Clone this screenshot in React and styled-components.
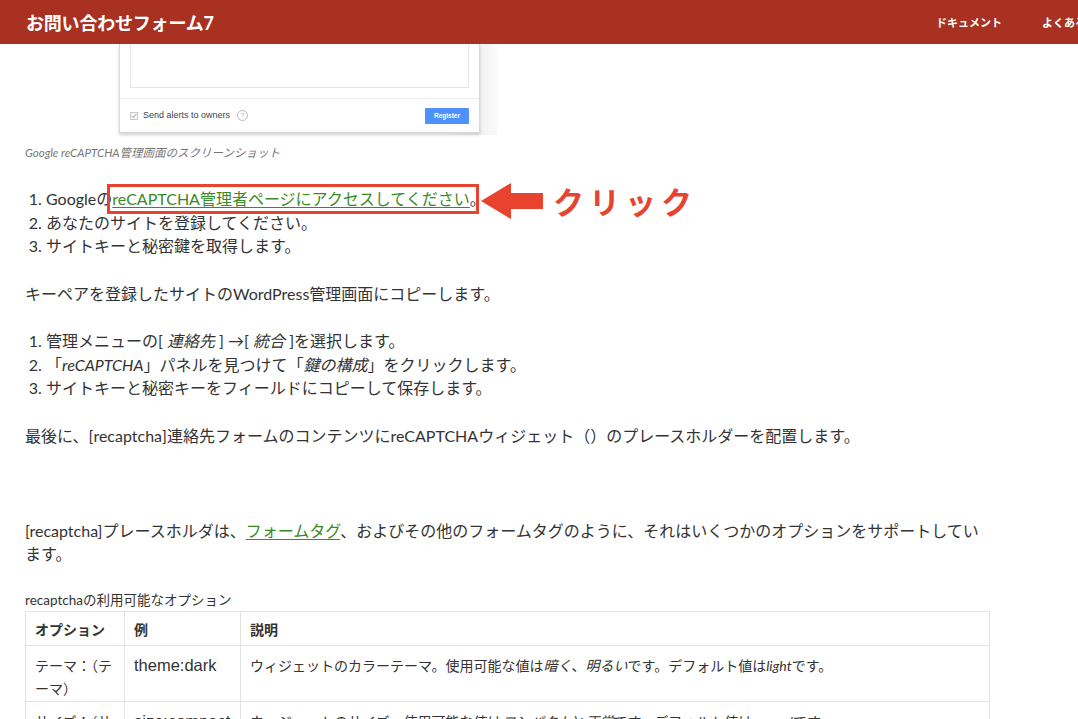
import styled, { createGlobalStyle } from "styled-components";

const GlobalStyle = createGlobalStyle`
  html, body {
    margin: 0;
    padding: 0;
    overflow: hidden;
    background: #fff;
  }
  body {
    font-family: Lato, "Noto Sans CJK JP", sans-serif;
    color: #333;
  }
`;

const Header = styled.header`
  height: 44px;
  background: #a83122;
  overflow: hidden;
`;

const HeaderInner = styled.div`
  display: flex;
  align-items: center;
  justify-content: space-between;
  width: 1128px;
  height: 100%;
  padding-left: 26px;
  box-sizing: border-box;
`;

const SiteTitle = styled.div`
  color: #fff;
  font-size: 18px;
  font-weight: 700;
  letter-spacing: -0.2px;
`;

const Nav = styled.nav`
  display: flex;
`;

const NavItem = styled.a`
  color: #fff;
  font-size: 11px;
  font-weight: 700;
  padding: 0 20px;
  text-decoration: none;
`;

const Main = styled.main`
  width: 965px;
  margin-left: 25px;
  font-size: 16px;
  line-height: 23.5px;
`;

const Figure = styled.div`
  width: 426px;
  height: 91px;
  margin-left: 47px;
  background: linear-gradient(90deg, #fff 0%, #fff 88%, #f3f3f3 96%, #fafafa 100%);
`;

const Card = styled.div`
  width: 361px;
  margin-left: 47px;
  background: #fff;
  border: 1px solid #dadada;
  border-top: none;
  box-shadow: 0 2px 3px rgba(0, 0, 0, 0.18);
  box-sizing: border-box;
`;

const FakeTextarea = styled.div`
  height: 43px;
  margin: 0 10px;
  border: 1px solid #e6e6e6;
  border-top: none;
`;

const CardFooter = styled.div`
  display: flex;
  align-items: center;
  justify-content: space-between;
  height: 33px;
  margin-top: 10px;
  padding: 0 10px;
  border-top: 1px solid #eee;
  font-family: "Liberation Sans", Arial, sans-serif;
  font-size: 9px;
  color: #444;
`;

const CheckRow = styled.div`
  display: flex;
  align-items: center;
  gap: 5px;
`;

const FakeCheckbox = styled.span`
  width: 8px;
  height: 8px;
  border: 1px solid #c8c8c8;
  display: flex;
  align-items: center;
  justify-content: center;
  box-sizing: border-box;
`;

const HelpDot = styled.span`
  width: 9px;
  height: 9px;
  border: 1px solid #bbb;
  border-radius: 50%;
  font-size: 6px;
  color: #aaa;
  display: inline-flex;
  align-items: center;
  justify-content: center;
  margin-left: 2px;
`;

const RegisterButton = styled.span`
  width: 44px;
  height: 16px;
  background: #4d90fe;
  color: #fff;
  font-weight: 700;
  font-size: 6.5px;
  display: flex;
  align-items: center;
  justify-content: center;
  border-radius: 1px;
`;

const FigCaption = styled.div`
  margin-top: 10px;
  font-size: 11.5px;
  line-height: 16px;
  font-style: italic;
  color: #777;
`;

const List = styled.ol`
  position: relative;
  margin: ${(p) => p.$top || 24}px 0 0;
  padding-left: 21px;
`;

const Para = styled.p`
  margin: 24px 0 0;
  min-height: 23.5px;
`;

const Link = styled.a`
  color: #3a8a25;
  text-decoration: underline;
  text-underline-offset: 2px;
`;

const Boxed = styled.span`
  position: relative;
  &::after {
    content: "";
    position: absolute;
    left: -5px;
    right: -9px;
    top: -5px;
    bottom: -6px;
    border: 3px solid #e8432f;
  }
`;

const Callout = styled.div`
  position: absolute;
  left: 456px;
  top: -4px;
  display: flex;
  align-items: center;
  gap: 10px;
`;

const CalloutText = styled.span`
  color: #e8432f;
  font-family: "Noto Sans CJK JP", sans-serif;
  font-weight: 700;
  font-size: 31px;
  line-height: 34px;
  letter-spacing: 5px;
`;

const Table = styled.table`
  width: 965px;
  margin-top: 25px;
  border-collapse: collapse;
  table-layout: fixed;
  font-size: 14px;
  line-height: 23px;
`;

const Caption = styled.caption`
  text-align: left;
  font-size: 13.5px;
  line-height: 18px;
  padding-bottom: 2px;
`;

const Th = styled.th`
  box-sizing: border-box;
  text-align: left;
  font-weight: 700;
  border: 1px solid #e3e3e3;
  padding: 6px 4px 4px 9px;
  width: ${(p) => p.$w || "auto"};
`;

const Td = styled.td`
  vertical-align: top;
  border: 1px solid #e3e3e3;
  padding: 8px 4px 1px 9px;
`;

const ExampleTd = styled(Td)`
  font-family: "Liberation Sans", Arial, "Noto Sans CJK JP", sans-serif;
  font-size: 16.5px;
`;

export default function App() {
  return (
    <>
      <GlobalStyle />
      <Header>
        <HeaderInner>
          <SiteTitle>お問い合わせフォーム7</SiteTitle>
          <Nav>
            <NavItem>ドキュメント</NavItem>
            <NavItem>よくある質問</NavItem>
          </Nav>
        </HeaderInner>
      </Header>
      <Main>
        <Figure>
          <Card>
            <FakeTextarea />
            <CardFooter>
              <CheckRow>
                <FakeCheckbox>
                  <svg width="7" height="6" viewBox="0 0 7 6">
                    <path d="M0.8 3.2 L2.6 4.8 L6.2 0.8" fill="none" stroke="#777" strokeWidth="1" />
                  </svg>
                </FakeCheckbox>
                <span>Send alerts to owners</span>
                <HelpDot>?</HelpDot>
              </CheckRow>
              <RegisterButton>Register</RegisterButton>
            </CardFooter>
          </Card>
        </Figure>
        <FigCaption>Google reCAPTCHA管理画面のスクリーンショット</FigCaption>

        <List $top={26}>
          <li>
            Googleの
            <Boxed>
              <Link>reCAPTCHA管理者ページにアクセスしてください</Link>
            </Boxed>
            。
          </li>
          <li>あなたのサイトを登録してください。</li>
          <li>サイトキーと秘密鍵を取得します。</li>
          <Callout>
            <svg width="62" height="36" viewBox="0 0 62 36">
              <polygon points="0,18 30,0 30,10 62,10 62,26 30,26 30,36" fill="#e8432f" />
            </svg>
            <CalloutText>クリック</CalloutText>
          </Callout>
        </List>

        <Para>キーペアを登録したサイトのWordPress管理画面にコピーします。</Para>

        <List>
          <li>
            管理メニューの[ <em>連絡先</em> ] →[ <em>統合</em> ]を選択します。
          </li>
          <li>
            「<em>reCAPTCHA</em>」パネルを見つけて「<em>鍵の構成</em>」をクリックします。
          </li>
          <li>サイトキーと秘密キーをフィールドにコピーして保存します。</li>
        </List>

        <Para>
          最後に、[recaptcha]連絡先フォームのコンテンツにreCAPTCHAウィジェット（）のプレースホルダーを配置します。
        </Para>
        <Para>&nbsp;</Para>
        <Para>
          [recaptcha]プレースホルダは、<Link>フォームタグ</Link>
          、およびその他のフォームタグのように、それはいくつかのオプションをサポートしています。
        </Para>

        <Table>
          <Caption>recaptchaの利用可能なオプション</Caption>
          <thead>
            <tr>
              <Th $w="99px">オプション</Th>
              <Th $w="116px">例</Th>
              <Th>説明</Th>
            </tr>
          </thead>
          <tbody>
            <tr>
              <Td>テーマ：（テーマ）</Td>
              <ExampleTd>theme:dark</ExampleTd>
              <Td>
                ウィジェットのカラーテーマ。使用可能な値は<em>暗く</em>、<em>明るい</em>
                です。デフォルト値は<em>light</em>です。
              </Td>
            </tr>
            <tr>
              <Td>サイズ：（サイズ）</Td>
              <ExampleTd>size:compact</ExampleTd>
              <Td>
                ウィジェットのサイズ。使用可能な値は<em>コンパクト</em>と<em>正常</em>
                です。デフォルト値は<em>normal</em>です。
              </Td>
            </tr>
          </tbody>
        </Table>
      </Main>
    </>
  );
}
